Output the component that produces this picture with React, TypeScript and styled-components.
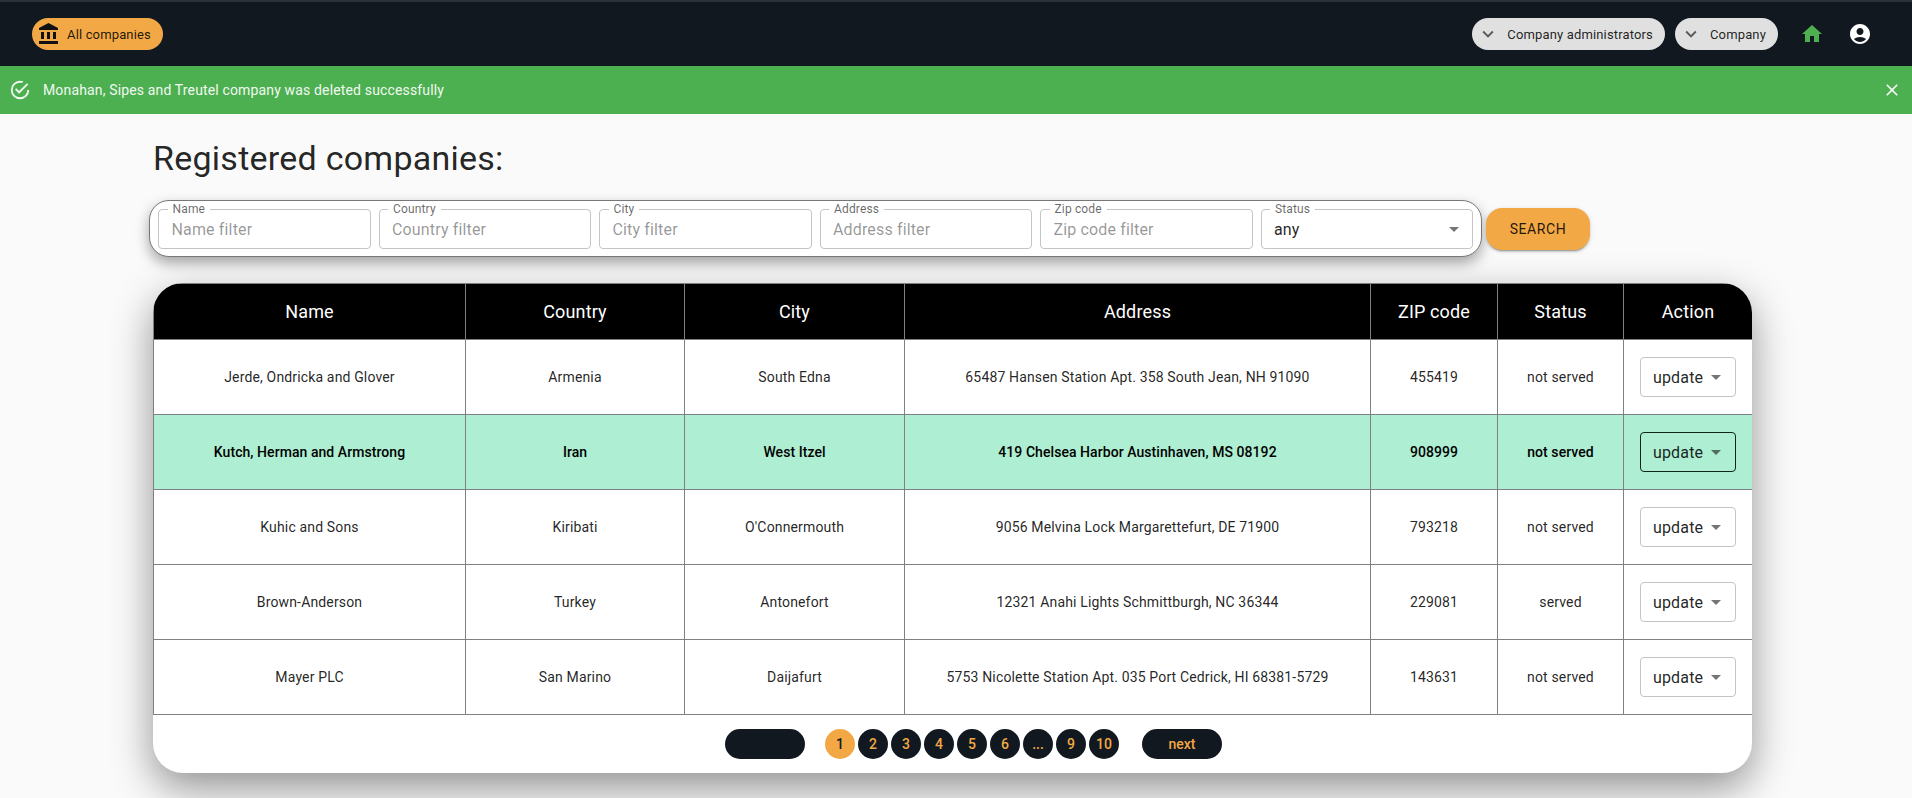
import styled, { createGlobalStyle } from "styled-components";

const GlobalStyle = createGlobalStyle`
  * {
    box-sizing: border-box;
  }

  html,
  body,
  #root {
    height: 100%;
  }

  body {
    margin: 0;
    background: #fafafa;
    font-family: Roboto, "Liberation Sans", sans-serif;
    color: rgba(0, 0, 0, 0.87);
  }
`;

const TopBar = styled.header`
  height: 66px;
  border-top: 2px solid #2b313b;
  background: #111820;
  display: flex;
  align-items: center;
  justify-content: space-between;
  padding: 0 28px 0 32px;
`;

const NavGroup = styled.nav`
  display: flex;
  align-items: center;
`;

const Chip = styled.button<{ $accent?: boolean }>`
  height: 32px;
  border: 0;
  border-radius: 16px;
  display: flex;
  align-items: center;
  font: 400 13px Roboto, sans-serif;
  letter-spacing: 0.15px;
  color: rgba(0, 0, 0, 0.87);
  background: ${(p) => (p.$accent ? "#f2a945" : "#e0e0e0")};
  padding: 0 12px 0 5px;
  margin-right: 10px;

  svg {
    fill: ${(p) => (p.$accent ? "#111" : "rgba(0, 0, 0, 0.6)")};
    margin-right: ${(p) => (p.$accent ? "6px" : "8px")};
    width: ${(p) => (p.$accent ? "24px" : "22px")};
    height: ${(p) => (p.$accent ? "24px" : "22px")};
  }
`;

const NavIcon = styled.svg<{ $color: string }>`
  width: 24px;
  height: 24px;
  fill: ${(p) => p.$color};
  margin-left: 12px;
  margin-right: 12px;
`;

const Notice = styled.div`
  height: 48px;
  background: #4caf50;
  color: #f1f9f1;
  display: flex;
  align-items: center;
  padding: 0 10px 0 9px;
  font-size: 14px;
  letter-spacing: 0.15px;

  svg {
    fill: currentColor;
  }
`;

const NoticeText = styled.span`
  margin-left: 12px;
  flex: 1;
`;

const Main = styled.main`
  height: calc(100% - 114px);
  padding: 23px 160px 0 153px;
  overflow: hidden;
`;

const Heading = styled.h1`
  margin: 0 0 21px;
  font-size: 34px;
  line-height: 42px;
  font-weight: 400;
  letter-spacing: 0.25px;
`;

const FilterRow = styled.div`
  display: flex;
  align-items: center;
  gap: 4px;
  margin-left: -4px;
`;

const FilterBox = styled.form`
  width: 1333px;
  height: 57px;
  padding: 8px;
  display: flex;
  gap: 8px;
  background: #fff;
  border: 1px solid #777;
  border-radius: 20px;
  box-shadow: 0 6px 14px rgba(0, 0, 0, 0.35);
`;

const Field = styled.div`
  position: relative;
  flex: 1;
  height: 40px;
  border: 1px solid #c4c4c4;
  border-radius: 4px;
  display: flex;
  align-items: center;
  padding: 0 6px 0 12.5px;
`;

const FieldLabel = styled.label`
  position: absolute;
  top: -8px;
  left: 8.5px;
  padding: 0 5px;
  background: #fff;
  font-size: 12px;
  line-height: 14px;
  letter-spacing: 0.15px;
  color: rgba(0, 0, 0, 0.6);
`;

const FieldInput = styled.input`
  width: 100%;
  border: 0;
  outline: 0;
  padding: 0;
  background: transparent;
  font: 400 16px Roboto, sans-serif;
  letter-spacing: 0.15px;

  &::placeholder {
    color: rgba(0, 0, 0, 0.42);
    opacity: 1;
  }
`;

const SelectValue = styled.span`
  flex: 1;
  font-size: 16px;
  letter-spacing: 0.15px;
`;

const Caret = styled.svg`
  width: 24px;
  height: 24px;
  fill: rgba(0, 0, 0, 0.54);
`;

const SearchButton = styled.button`
  width: 104px;
  height: 42px;
  border: 0;
  border-radius: 16px;
  background: #f2a945;
  color: rgba(0, 0, 0, 0.87);
  font: 400 14px Roboto, sans-serif;
  letter-spacing: 0.6px;
  text-transform: uppercase;
  box-shadow: 0 3px 1px -2px rgba(0, 0, 0, 0.2), 0 2px 2px rgba(0, 0, 0, 0.14), 0 1px 5px rgba(0, 0, 0, 0.12);
`;

const Card = styled.section`
  width: 1599px;
  margin-top: 26px;
  background: #fff;
  border-radius: 30px;
  box-shadow: 0 15px 40px rgba(0, 0, 0, 0.42);
`;

const TableClip = styled.div`
  border-radius: 30px 30px 0 0;
  overflow: hidden;
`;

const Table = styled.table`
  width: 100%;
  table-layout: fixed;
  border-collapse: collapse;
`;

const HeadCell = styled.th`
  height: 56px;
  padding: 0;
  background: #000;
  color: #fff;
  border: 1px solid #808080;
  font-size: 18px;
  font-weight: 400;
  letter-spacing: 0.15px;
`;

const Cell = styled.td<{ $selected?: boolean }>`
  height: 75px;
  padding: 0;
  text-align: center;
  border: 1px solid #808080;
  font-size: 14px;
  letter-spacing: ${(p) => (p.$selected ? "0.06px" : "0.15px")};
  font-weight: ${(p) => (p.$selected ? 500 : 400)};
  color: ${(p) => (p.$selected ? "#000" : "rgba(0, 0, 0, 0.87)")};
  background: ${(p) => (p.$selected ? "#aeeed2" : "#fff")};
`;

const UpdateSelect = styled.div<{ $selected?: boolean }>`
  width: 96px;
  height: 40px;
  margin: 0 auto;
  display: flex;
  align-items: center;
  padding-left: 12px;
  border: 1px solid ${(p) => (p.$selected ? "#10231b" : "#c4c4c4")};
  border-radius: 4px;
  font-size: 16px;
  font-weight: 400;
  letter-spacing: 0.15px;
  color: rgba(0, 0, 0, 0.87);

  ${Caret} {
    margin-left: 1px;
  }
`;

const Pager = styled.div`
  height: 58px;
  padding-left: 42px;
  display: flex;
  align-items: center;
  justify-content: center;
`;

const PagerEnd = styled.button`
  width: 80px;
  height: 30px;
  border: 0;
  border-radius: 15px;
  background: #111820;
  color: #f2a945;
  font: 500 14px Roboto, sans-serif;
`;

const PageList = styled.div`
  display: flex;
  gap: 3px;
  margin: 0 23px 0 20px;
`;

const PageDot = styled.button<{ $active?: boolean }>`
  width: 30px;
  height: 30px;
  padding: 0;
  border: 0;
  border-radius: 50%;
  background: ${(p) => (p.$active ? "#f2a945" : "#111820")};
  color: ${(p) => (p.$active ? "#111820" : "#f2a945")};
  font: 500 14px Roboto, sans-serif;
`;

const filters = [
  ["Name", "Name filter"],
  ["Country", "Country filter"],
  ["City", "City filter"],
  ["Address", "Address filter"],
  ["Zip code", "Zip code filter"],
];

const columns = [
  ["Name", 312],
  ["Country", 219],
  ["City", 220],
  ["Address", 466],
  ["ZIP code", 127],
  ["Status", 126],
  ["Action", 129],
] as const;

const companies = [
  ["Jerde, Ondricka and Glover", "Armenia", "South Edna", "65487 Hansen Station Apt. 358 South Jean, NH 91090", "455419", "not served"],
  ["Kutch, Herman and Armstrong", "Iran", "West Itzel", "419 Chelsea Harbor Austinhaven, MS 08192", "908999", "not served"],
  ["Kuhic and Sons", "Kiribati", "O'Connermouth", "9056 Melvina Lock Margarettefurt, DE 71900", "793218", "not served"],
  ["Brown-Anderson", "Turkey", "Antonefort", "12321 Anahi Lights Schmittburgh, NC 36344", "229081", "served"],
  ["Mayer PLC", "San Marino", "Daijafurt", "5753 Nicolette Station Apt. 035 Port Cedrick, HI 68381-5729", "143631", "not served"],
];

const pages = ["1", "2", "3", "4", "5", "6", "...", "9", "10"];

const ExpandIcon = () => (
  <svg viewBox="0 0 24 24">
    <path d="M16.59 8.59 12 13.17 7.41 8.59 6 10l6 6 6-6z" />
  </svg>
);

const DropArrow = () => (
  <Caret viewBox="0 0 24 24">
    <path d="M7 10l5 5 5-5z" />
  </Caret>
);

const App = () => {
  return (
    <>
      <GlobalStyle />
      <TopBar>
        <Chip $accent>
          <svg viewBox="0 0 24 24">
            <path d="M4 10v7h3v-7H4zm6 0v7h3v-7h-3zM2 22h19v-3H2v3zm14-12v7h3v-7h-3zm-4.5-9L2 6v2h19V6l-9.5-5z" />
          </svg>
          All companies
        </Chip>
        <NavGroup>
          <Chip>
            <ExpandIcon />
            Company administrators
          </Chip>
          <Chip>
            <ExpandIcon />
            Company
          </Chip>
          <NavIcon $color="#4caf50" viewBox="0 0 24 24">
            <path d="M10 20v-6h4v6h5v-8h3L12 3 2 12h3v8z" />
          </NavIcon>
          <NavIcon $color="#fff" viewBox="0 0 24 24">
            <path d="M12 2C6.48 2 2 6.48 2 12s4.48 10 10 10 10-4.48 10-10S17.52 2 12 2zm0 4c1.93 0 3.5 1.57 3.5 3.5S13.93 13 12 13s-3.5-1.57-3.5-3.5S10.07 6 12 6zm0 14c-2.03 0-4.43-.82-6.14-2.88C7.55 15.8 9.68 15 12 15s4.45.8 6.14 2.12C16.43 19.18 14.03 20 12 20z" />
          </NavIcon>
        </NavGroup>
      </TopBar>

      <Notice>
        <svg viewBox="0 0 24 24" width="22" height="22">
          <path d="M20,12A8,8 0 0,1 12,20A8,8 0 0,1 4,12A8,8 0 0,1 12,4C12.76,4 13.5,4.11 14.2,4.31L15.77,2.74C14.61,2.26 13.34,2 12,2A10,10 0 0,0 2,12A10,10 0 0,0 12,22A10,10 0 0,0 22,12M7.91,10.08L6.5,11.5L11,16L21,6L19.59,4.58L11,13.17L7.91,10.08Z" />
        </svg>
        <NoticeText>Monahan, Sipes and Treutel company was deleted successfully</NoticeText>
        <svg viewBox="0 0 24 24" width="20" height="20">
          <path d="M19 6.41 17.59 5 12 10.59 6.41 5 5 6.41 10.59 12 5 17.59 6.41 19 12 13.41 17.59 19 19 17.59 13.41 12z" />
        </svg>
      </Notice>

      <Main>
        <Heading>Registered companies:</Heading>
        <FilterRow>
          <FilterBox>
            {filters.map(([label, placeholder]) => (
              <Field key={label}>
                <FieldLabel>{label}</FieldLabel>
                <FieldInput placeholder={placeholder} />
              </Field>
            ))}
            <Field>
              <FieldLabel>Status</FieldLabel>
              <SelectValue>any</SelectValue>
              <DropArrow />
            </Field>
          </FilterBox>
          <SearchButton type="button">Search</SearchButton>
        </FilterRow>

        <Card>
          <TableClip>
            <Table>
              <colgroup>
                {columns.map(([name, width]) => (
                  <col key={name} width={width} />
                ))}
              </colgroup>
              <thead>
                <tr>
                  {columns.map(([name]) => (
                    <HeadCell key={name}>{name}</HeadCell>
                  ))}
                </tr>
              </thead>
              <tbody>
                {companies.map((company, i) => (
                  <tr key={company[0]}>
                    {company.map((value, j) => (
                      <Cell key={j} $selected={i === 1}>
                        {value}
                      </Cell>
                    ))}
                    <Cell $selected={i === 1}>
                      <UpdateSelect $selected={i === 1}>
                        update
                        <DropArrow />
                      </UpdateSelect>
                    </Cell>
                  </tr>
                ))}
              </tbody>
            </Table>
          </TableClip>
          <Pager>
            <PagerEnd />
            <PageList>
              {pages.map((page) => (
                <PageDot key={page} $active={page === "1"}>
                  {page}
                </PageDot>
              ))}
            </PageList>
            <PagerEnd>next</PagerEnd>
          </Pager>
        </Card>
      </Main>
    </>
  );
};

export default App;
